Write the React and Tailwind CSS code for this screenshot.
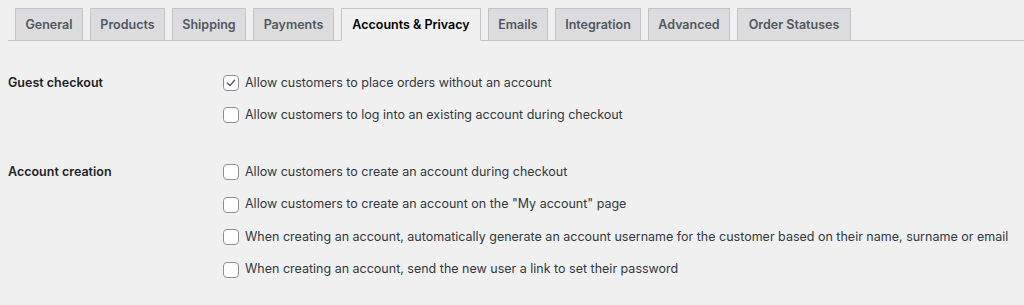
import React from "react";

const tabs = [
  { label: "General", w: "w-[68px]" },
  { label: "Products", w: "w-[75px]" },
  { label: "Shipping", w: "w-[74px]" },
  { label: "Payments", w: "w-[81px]" },
  { label: "Accounts & Privacy", w: "w-[140px]", active: true },
  { label: "Emails", w: "w-[60px]" },
  { label: "Integration", w: "w-[86px]" },
  { label: "Advanced", w: "w-[82px]" },
  { label: "Order Statuses", w: "w-[114px]" },
];

function Checkbox({ checked }) {
  return (
    <span className="w-4 h-4 shrink-0 rounded-[4px] border border-[#8c8f94] bg-white flex items-center justify-center">
      {checked && (
        <svg width="12" height="12" viewBox="0 0 12 12" fill="none">
          <path d="M2.5 6.2 L5 8.6 L9.6 3.2" stroke="#50575e" strokeWidth="1.4" strokeLinecap="round" strokeLinejoin="round" />
        </svg>
      )}
    </span>
  );
}

function Row({ checked, children, h }) {
  return (
    <div className={h + " flex items-center gap-[6px]"}>
      <Checkbox checked={checked} />
      <span className="text-[12.5px] text-[#32383d] whitespace-nowrap">{children}</span>
    </div>
  );
}

function Section({ title, rows, className, rowH }) {
  return (
    <div className={"flex " + className}>
      <div className="w-[223px] shrink-0 pl-2 pt-[7px] text-[12.5px] font-semibold text-[#1d2327]">{title}</div>
      <div className="flex flex-col">
        {rows.map((r, i) => (
          <Row key={i} h={rowH} checked={r.checked}>{r.text}</Row>
        ))}
      </div>
    </div>
  );
}

export default function App() {
  return (
    <div className="w-[1024px] h-[305px] bg-[#f0f0f1] overflow-hidden pt-2" style={{ fontFamily: "Inter, 'Liberation Sans', sans-serif" }}>
      <div className="ml-2 flex gap-[7px] pl-[7px] border-b border-[#c3c4c7] h-[33px]">
        {tabs.map((t) => (
          <div
            key={t.label}
            className={
              t.w +
              " h-[33px] pt-[2px] flex items-center justify-center border text-[12.5px] font-semibold " +
              (t.active
                ? "bg-[#f0f0f1] border-[#c3c4c7] border-b-[#f0f0f1] text-black"
                : "bg-[#dcdcde] border-[#c3c4c7] text-[#50575e]")
            }
          >
            {t.label}
          </div>
        ))}
      </div>
      <Section
        className="mt-[26px]"
        rowH="h-8"
        title="Guest checkout"
        rows={[
          { checked: true, text: "Allow customers to place orders without an account" },
          { text: "Allow customers to log into an existing account during checkout" },
        ]}
      />
      <Section
        className="mt-[25px]"
        rowH="h-[32.5px]"
        title="Account creation"
        rows={[
          { text: "Allow customers to create an account during checkout" },
          { text: 'Allow customers to create an account on the "My account" page' },
          { text: "When creating an account, automatically generate an account username for the customer based on their name, surname or email" },
          { text: "When creating an account, send the new user a link to set their password" },
        ]}
      />
    </div>
  );
}
